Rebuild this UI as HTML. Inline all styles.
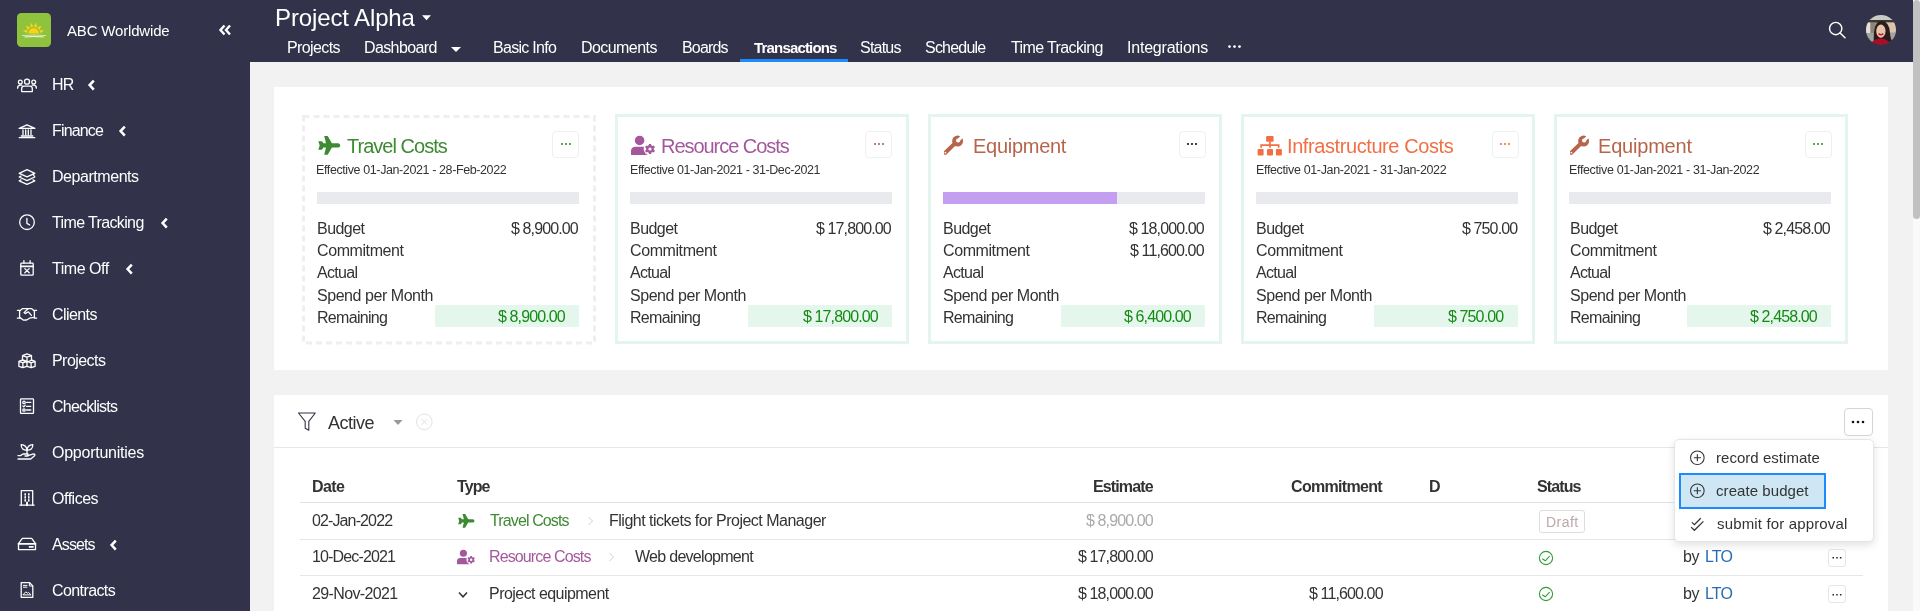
<!DOCTYPE html>
<html><head><meta charset="utf-8"><title>Transactions</title>
<style>
html,body{margin:0;padding:0}
body{width:1920px;height:611px;overflow:hidden;position:relative;background:#f2f2f2;font-family:"Liberation Sans",sans-serif}
.t{position:absolute;white-space:nowrap;line-height:1;will-change:transform}
svg{overflow:visible}
</style></head><body>
<div style="position:absolute;left:0px;top:0px;width:250px;height:611px;background:#32334a"></div>
<div style="position:absolute;left:250px;top:0px;width:1663px;height:62px;background:#32334a"></div>
<div style="position:absolute;left:1913px;top:0px;width:7px;height:611px;background:#fafafa"></div>
<div style="position:absolute;left:1913px;top:0px;width:7px;height:219px;background:#c1c1c1;border-radius:3.5px"></div>
<div style="position:absolute;left:274px;top:87px;width:1614px;height:283px;background:#fff"></div>
<div style="position:absolute;left:274px;top:395px;width:1614px;height:216px;background:#fff"></div>
<svg style="position:absolute;left:17px;top:13px;" width="34" height="34" viewBox="0 0 34 34"><rect width="34" height="34" rx="4.5" fill="#90c33d"/>
<g fill="#fcd116"><path d="M27.42 17.50 L23.42 20.33 L22.54 17.05 Z"/><path d="M24.52 12.48 L22.47 16.94 L20.06 14.53 Z"/><path d="M19.50 9.58 L19.95 14.46 L16.67 13.58 Z"/><path d="M13.70 9.58 L16.53 13.58 L13.25 14.46 Z"/><path d="M8.68 12.48 L13.14 14.53 L10.73 16.94 Z"/><path d="M5.78 17.50 L10.66 17.05 L9.78 20.33 Z"/><path d="M11.2 20.5 A5.4 5.4 0 0 1 22 20.5 Z"/></g>
<path d="M5 22.6 Q17 21.4 29 22.6" stroke="#fff" stroke-width="0.8" fill="none" opacity="0.75"/>
<path d="M7.5 23.9 Q17 23.2 26.5 23.9" stroke="#fff" stroke-width="1" fill="none" opacity="0.9"/></svg>
<div class="t" style="top:23.00px;font-size:15px;color:#fff;letter-spacing:-0.175px;left:67.00px;">ABC Worldwide</div>
<svg style="position:absolute;left:218px;top:24px;" width="14" height="12" viewBox="0 0 14 12"><path d="M6.5 1.5 L2.5 6 L6.5 10.5 M12 1.5 L8 6 L12 10.5" stroke="#fff" stroke-width="2.4" fill="none" stroke-linejoin="miter"/></svg>
<div class="t" style="top:77.00px;font-size:16px;color:#fff;letter-spacing:-0.880px;left:52.10px;">HR</div>
<svg style="position:absolute;left:14px;top:72.6px;fill:none;stroke:#fff;stroke-width:1.3;stroke-linejoin:round;stroke-linecap:round" width="26" height="24" viewBox="0 0 26 24"><circle cx="13" cy="8.7" r="2.5"/><circle cx="6.3" cy="9.1" r="1.9"/><circle cx="19.7" cy="9.1" r="1.9"/><path d="M7.7 18.6 V15.6 a2.4 2.4 0 0 1 2.4-2.4 h5.8 a2.4 2.4 0 0 1 2.4 2.4 V18.6 Z"/><path d="M3.6 15.2 a3 3 0 0 1 3-3 h1.3"/><path d="M22.4 15.2 a3 3 0 0 0 -3-3 h-1.3"/></svg>
<svg style="position:absolute;left:87px;top:79.0px;" width="10" height="12" viewBox="0 0 10 12"><path d="M6.8 1.6 L2.6 6.1 L6.8 10.6" stroke="#fff" stroke-width="2.5" fill="none" stroke-linejoin="miter"/></svg>
<div class="t" style="top:123.00px;font-size:16px;color:#fff;letter-spacing:-0.850px;left:52.10px;">Finance</div>
<svg style="position:absolute;left:14px;top:118.55px;fill:none;stroke:#fff;stroke-width:1.3;stroke-linejoin:round;stroke-linecap:round" width="26" height="24" viewBox="0 0 26 24"><path d="M5.2 9.4 L13 5.8 L20.8 9.4 Z"/><path d="M9 10.8 V15.8 M11.7 10.8 V15.8 M14.3 10.8 V15.8 M17 10.8 V15.8"/><path d="M7.2 17 H18.8"/><path d="M5.2 18.6 H20.8"/></svg>
<svg style="position:absolute;left:118px;top:124.95px;" width="10" height="12" viewBox="0 0 10 12"><path d="M6.8 1.6 L2.6 6.1 L6.8 10.6" stroke="#fff" stroke-width="2.5" fill="none" stroke-linejoin="miter"/></svg>
<div class="t" style="top:169.00px;font-size:16px;color:#fff;letter-spacing:-0.450px;left:52.10px;">Departments</div>
<svg style="position:absolute;left:14px;top:164.5px;fill:none;stroke:#fff;stroke-width:1.3;stroke-linejoin:round;stroke-linecap:round" width="26" height="24" viewBox="0 0 26 24"><path d="M13 4.7 L20.8 8.3 L13 11.9 L5.2 8.3 Z"/><path d="M7 11.1 L5.2 12 L13 15.6 L20.8 12 L19 9.1"/><path d="M7 14.9 L5.2 15.8 L13 19.4 L20.8 15.8 L19 14.9"/></svg>
<div class="t" style="top:215.00px;font-size:16px;color:#fff;letter-spacing:-0.633px;left:52.10px;">Time Tracking</div>
<svg style="position:absolute;left:14px;top:210.45000000000005px;fill:none;stroke:#fff;stroke-width:1.3;stroke-linejoin:round;stroke-linecap:round" width="26" height="24" viewBox="0 0 26 24"><circle cx="13" cy="12.2" r="7.3"/><path d="M12.9 8.3 V13.4 L15.7 15"/></svg>
<svg style="position:absolute;left:160px;top:216.85000000000002px;" width="10" height="12" viewBox="0 0 10 12"><path d="M6.8 1.6 L2.6 6.1 L6.8 10.6" stroke="#fff" stroke-width="2.5" fill="none" stroke-linejoin="miter"/></svg>
<div class="t" style="top:261.00px;font-size:16px;color:#fff;letter-spacing:-0.457px;left:52.10px;">Time Off</div>
<svg style="position:absolute;left:14px;top:256.40000000000003px;fill:none;stroke:#fff;stroke-width:1.3;stroke-linejoin:round;stroke-linecap:round" width="26" height="24" viewBox="0 0 26 24"><rect x="6.8" y="7.2" width="12.4" height="12" rx="0.8"/><path d="M9.9 4.6 V7.2 M16.1 4.6 V7.2"/><path d="M6.8 10.3 H19.2" stroke-width="1.8"/><path d="M10.8 12.6 L15.2 16.8 M15.2 12.6 L10.8 16.8"/></svg>
<svg style="position:absolute;left:125px;top:262.8px;" width="10" height="12" viewBox="0 0 10 12"><path d="M6.8 1.6 L2.6 6.1 L6.8 10.6" stroke="#fff" stroke-width="2.5" fill="none" stroke-linejoin="miter"/></svg>
<div class="t" style="top:307.00px;font-size:16px;color:#fff;letter-spacing:-0.583px;left:52.10px;">Clients</div>
<svg style="position:absolute;left:14px;top:302.35px;fill:none;stroke:#fff;stroke-width:1.3;stroke-linejoin:round;stroke-linecap:round" width="26" height="24" viewBox="0 0 26 24"><path d="M3.4 8.3 H5.6 V16.2 H3.4 M22.6 8.3 H20.4 V16.2 H22.6"/><path d="M5.6 9 L8.6 6.6 H17.4 L20.4 9"/><path d="M5.6 15.4 L9.6 18.2 L12.6 18 L16.4 15.8 L20.4 15.4"/><path d="M14 6.8 L10 10.6 L11.2 11.6 L14.4 9.8 L17.4 13.4"/></svg>
<div class="t" style="top:353.00px;font-size:16px;color:#fff;letter-spacing:-0.557px;left:52.10px;">Projects</div>
<svg style="position:absolute;left:14px;top:348.30000000000007px;fill:none;stroke:#fff;stroke-width:1.3;stroke-linejoin:round;stroke-linecap:round" width="26" height="24" viewBox="0 0 26 24"><path d="M13 5.9 L17.5 7.6 V12.4 L13 14 L8.5 12.4 V7.6 Z M8.5 7.6 L13 9.2 L17.5 7.6 M13 9.2 V14"/><path d="M8.7 11.8 L13 13.4 V18.3 L8.7 19.7 L4.9 18.3 V13.4 Z M4.9 13.4 L8.9 14.9 L13 13.4 M8.9 14.9 V19.7"/><path d="M17.3 11.8 L21.1 13.4 V18.3 L17.3 19.7 L13 18.3 M13 13.4 L17.1 14.9 L21.1 13.4 M17.1 14.9 V19.7"/></svg>
<div class="t" style="top:399.00px;font-size:16px;color:#fff;letter-spacing:-0.767px;left:52.10px;">Checklists</div>
<svg style="position:absolute;left:14px;top:394.25000000000006px;fill:none;stroke:#fff;stroke-width:1.3;stroke-linejoin:round;stroke-linecap:round" width="26" height="24" viewBox="0 0 26 24"><rect x="6.5" y="4.9" width="13" height="14.4" rx="0.6"/><circle cx="10" cy="8.4" r="1.2"/><circle cx="10" cy="16" r="1.2"/><path d="M8.9 12 L9.8 12.9 L11.2 11.3"/><path d="M12.6 8.4 H16.8 M12.6 12.3 H16.8 M12.6 16 H16.8"/></svg>
<div class="t" style="top:445.00px;font-size:16px;color:#fff;letter-spacing:-0.242px;left:52.10px;">Opportunities</div>
<svg style="position:absolute;left:14px;top:440.20000000000005px;fill:none;stroke:#fff;stroke-width:1.3;stroke-linejoin:round;stroke-linecap:round" width="26" height="24" viewBox="0 0 26 24"><path d="M13 10.2 C9.5 10.4 7 8.5 7.2 4.6 C10.5 4.8 12.8 6.6 13 10.2 Z"/><path d="M13 10.2 C16.5 10.4 19 8.5 18.8 4.6 C15.5 4.8 13.2 6.6 13 10.2 Z"/><path d="M13 10.2 V13.4"/><path d="M4 15.6 H6.5 L9 14 H14 V15.4 Q14 16 13.4 16 H11"/><path d="M14 15.6 L19.5 13.9 Q21.6 14 20.5 15.8 L16.8 19 H4"/></svg>
<div class="t" style="top:491.00px;font-size:16px;color:#fff;letter-spacing:-0.483px;left:52.10px;">Offices</div>
<svg style="position:absolute;left:14px;top:486.15000000000003px;fill:none;stroke:#fff;stroke-width:1.3;stroke-linejoin:round;stroke-linecap:round" width="26" height="24" viewBox="0 0 26 24"><path d="M7.3 19.2 V4.7 H18.7 V19.2"/><path d="M5.9 19.2 H20.1"/><path d="M11.2 7.8 V9 M14.8 7.8 V9 M11.2 10.8 V12 M14.8 10.8 V12 M11.2 13.8 V15 M14.8 13.8 V15" stroke-width="1.6"/><path d="M13 16.4 V19.2" stroke-width="2"/></svg>
<div class="t" style="top:537.00px;font-size:16px;color:#fff;letter-spacing:-0.880px;left:52.10px;">Assets</div>
<svg style="position:absolute;left:14px;top:532.0999999999999px;fill:none;stroke:#fff;stroke-width:1.3;stroke-linejoin:round;stroke-linecap:round" width="26" height="24" viewBox="0 0 26 24"><path d="M4.5 11.6 L8.3 6.4 H17.7 L21.5 11.6 V17.6 H4.5 Z"/><path d="M4.5 11.8 H21.5" stroke-width="1.8"/><path d="M15.4 14.9 H19" stroke-width="1.6" stroke-dasharray="1 0.6"/></svg>
<svg style="position:absolute;left:109.4px;top:538.5px;" width="10" height="12" viewBox="0 0 10 12"><path d="M6.8 1.6 L2.6 6.1 L6.8 10.6" stroke="#fff" stroke-width="2.5" fill="none" stroke-linejoin="miter"/></svg>
<div class="t" style="top:583.00px;font-size:16px;color:#fff;letter-spacing:-0.600px;left:52.10px;">Contracts</div>
<svg style="position:absolute;left:14px;top:578.05px;fill:none;stroke:#fff;stroke-width:1.3;stroke-linejoin:round;stroke-linecap:round" width="26" height="24" viewBox="0 0 26 24"><path d="M7.2 4.7 H15.6 L18.8 7.9 V19.3 H7.2 Z"/><path d="M15.4 5 V8 H18.6" stroke-width="1"/><path d="M9.4 7.4 H13 M9.4 9.2 H13" stroke-width="1"/><path d="M9.2 16.6 L11.8 13.8 L13.3 15.2 L14.5 14.4 L16.8 16.6 Z" stroke-width="1"/></svg>
<div class="t" style="top:6.00px;font-size:24px;color:#fff;letter-spacing:-0.125px;left:274.60px;">Project Alpha</div>
<svg style="position:absolute;left:421px;top:14px;" width="11" height="7" viewBox="0 0 11 7"><path d="M1 1.2 H10 L5.5 6.2 Z" fill="#fff"/></svg>
<div class="t" style="top:40.00px;font-size:16px;color:#fff;letter-spacing:-0.600px;left:286.70px;">Projects</div>
<div class="t" style="top:40.00px;font-size:16px;color:#fff;letter-spacing:-0.613px;left:364.20px;">Dashboard</div>
<div class="t" style="top:40.00px;font-size:16px;color:#fff;letter-spacing:-0.700px;left:493.10px;">Basic Info</div>
<div class="t" style="top:40.00px;font-size:16px;color:#fff;letter-spacing:-0.562px;left:581.40px;">Documents</div>
<div class="t" style="top:40.00px;font-size:16px;color:#fff;letter-spacing:-0.820px;left:681.70px;">Boards</div>
<div class="t" style="top:40.00px;font-size:16px;color:#fff;letter-spacing:-0.780px;left:859.70px;">Status</div>
<div class="t" style="top:40.00px;font-size:16px;color:#fff;letter-spacing:-0.786px;left:925.30px;">Schedule</div>
<div class="t" style="top:40.00px;font-size:16px;color:#fff;letter-spacing:-0.617px;left:1011.20px;">Time Tracking</div>
<div class="t" style="top:40.00px;font-size:16px;color:#fff;letter-spacing:-0.209px;left:1127.00px;">Integrations</div>
<div class="t" style="top:40.00px;font-size:15px;color:#fff;font-weight:bold;letter-spacing:-0.825px;left:753.55px;">Transactions</div>
<svg style="position:absolute;left:450px;top:46px;" width="12" height="7" viewBox="0 0 12 7"><path d="M1 1 H11 L6 6 Z" fill="#fff"/></svg>
<div style="position:absolute;left:740px;top:59px;width:108px;height:3px;background:#1a8cff"></div>
<svg style="position:absolute;left:1227px;top:43px;" width="15" height="7" viewBox="0 0 15 7"><circle cx="2.5" cy="3.6" r="1.35" fill="#fff"/><circle cx="7.5" cy="3.6" r="1.35" fill="#fff"/><circle cx="12.5" cy="3.6" r="1.35" fill="#fff"/></svg>
<svg style="position:absolute;left:1826px;top:19px;" width="22" height="22" viewBox="0 0 22 22"><circle cx="9.7" cy="9.5" r="6.15" stroke="#fff" stroke-width="1.45" fill="none"/><path d="M14.1 14 L19 18.8" stroke="#fff" stroke-width="1.5" stroke-linecap="round"/></svg>
<svg style="position:absolute;left:1866px;top:15px;" width="30" height="30" viewBox="0 0 30 30"><defs><clipPath id="av"><circle cx="15" cy="14.9" r="15"/></clipPath><filter id="avb" x="-20%" y="-20%" width="140%" height="140%"><feGaussianBlur stdDeviation="0.45"/></filter></defs><g clip-path="url(#av)"><g filter="url(#avb)"><rect x="-3" y="-3" width="36" height="36" fill="#9d9e99"/><rect x="-3" y="-3" width="36" height="8.5" fill="#c9cbc6"/><rect x="-3" y="5" width="36" height="2.6" fill="#3f372f"/><rect x="-3" y="7.5" width="7.5" height="11" fill="#e6e1d6"/><rect x="4.5" y="7.5" width="5" height="11" fill="#8c8478"/><rect x="20" y="7.5" width="13" height="10" fill="#dcc3ab"/><rect x="-3" y="18" width="36" height="15" fill="#a2a39e"/><path d="M7.8 27 Q7 6.5 15.2 6 Q23.5 6.3 24 18 Q24.5 24 26.5 27 L20 27 Z" fill="#2a1f1b"/><ellipse cx="14.9" cy="16.2" rx="4.6" ry="6.6" fill="#e9c3ab"/><path d="M12.6 18.6 Q14.9 20.8 17.2 18.6" stroke="#d0122c" stroke-width="1.5" fill="none"/><path d="M3 33 Q4.5 24.2 14.5 23.6 Q23.5 23.8 26.5 33 Z" fill="#a90d2a"/></g></g></svg>
<svg style="position:absolute;left:301.5px;top:114.5px;" width="294" height="229.5" viewBox="0 0 294 229.5"><rect x="1.5" y="1.5" width="291" height="226.5" fill="none" stroke="#efefef" stroke-width="3" stroke-dasharray="6 4"/></svg>
<svg style="position:absolute;left:314.0px;top:132px;fill:#3c8a31" width="30" height="26" viewBox="0 0 30 26"><path d="M4.3 9.2 H7.9 L9.4 11.3 H12 L10.2 4 H13.7 L17.9 11.2 H24.2 Q26.1 11.4 26.3 13.4 Q26.1 15.4 24.2 15.6 H17.9 L13.7 22.8 H10.2 L12 15.5 H9.4 L7.9 17.8 H4.3 L5.7 13.4 Z"/></svg>
<div class="t" style="top:136.00px;font-size:20px;color:#3c8a31;letter-spacing:-0.973px;left:347.00px;">Travel Costs</div>
<div class="t" style="top:164.00px;font-size:12.5px;color:#333;letter-spacing:-0.394px;left:316.40px;">Effective 01-Jan-2021 - 28-Feb-2022</div>
<div style="position:absolute;left:552.3px;top:130.8px;width:27px;height:27px;box-sizing:border-box;border:1px solid #f0f0f0;border-radius:4px"></div>
<svg style="position:absolute;left:561.0px;top:143px;fill:#3c8a31" width="10" height="2" viewBox="0 0 10 2"><circle cx="1" cy="1" r="1.05"/><circle cx="5" cy="1" r="1.05"/><circle cx="9" cy="1" r="1.05"/></svg>
<div style="position:absolute;left:317.0px;top:191.6px;width:261.5px;height:12.2px;background:#e8eaed"></div>
<div class="t" style="top:221.00px;font-size:16px;color:#333;letter-spacing:-0.540px;left:317.10px;">Budget</div>
<div class="t" style="top:243.00px;font-size:16px;color:#333;letter-spacing:-0.411px;left:317.10px;">Commitment</div>
<div class="t" style="top:265.00px;font-size:16px;color:#333;letter-spacing:-0.680px;left:317.10px;">Actual</div>
<div class="t" style="top:288.00px;font-size:16px;color:#333;letter-spacing:-0.450px;left:317.10px;">Spend per Month</div>
<div class="t" style="top:310.00px;font-size:16px;color:#333;letter-spacing:-0.688px;left:317.10px;">Remaining</div>
<div class="t" style="top:221.00px;font-size:16px;color:#333;letter-spacing:-0.880px;left:510.82px;">$ 8,900.00</div>
<div style="position:absolute;left:435.0px;top:305.4px;width:143.5px;height:22.1px;background:#e5f6ed"></div>
<div class="t" style="top:309.00px;font-size:16px;color:#148c14;letter-spacing:-0.880px;left:497.52px;">$ 8,900.00</div>
<div style="position:absolute;left:614.6px;top:114.2px;width:294px;height:229.8px;box-sizing:border-box;border:3px solid #e3f5ec"></div>
<svg style="position:absolute;left:627.0px;top:132px;fill:#a5579c" width="32" height="26" viewBox="0 0 32 26"><defs><mask id="rm1"><rect x="-2" y="-2" width="36" height="30" fill="#fff"/><circle cx="23.0" cy="17.0" r="6.3" fill="#000"/></mask></defs><circle cx="12.6" cy="8.4" r="4.75"/><path mask="url(#rm1)" d="M4 23 V19.3 Q4 14.7 8.6 14.7 H16.6 Q20 14.7 21 17 V23 Z"/><path d="M21.67 13.34 L22.01 11.90 L23.99 11.90 L24.33 13.34 L25.51 14.01 L26.92 13.59 L27.92 15.31 L26.84 16.32 L26.84 17.68 L27.92 18.69 L26.92 20.41 L25.51 19.99 L24.33 20.66 L23.99 22.10 L22.01 22.10 L21.67 20.66 L20.49 19.99 L19.08 20.41 L18.08 18.69 L19.16 17.68 L19.16 16.32 L18.08 15.31 L19.08 13.59 L20.49 14.01 Z M24.60 17.00 A1.6 1.6 0 1 0 21.40 17.00 A1.6 1.6 0 1 0 24.60 17.00 Z" fill-rule="evenodd"/></svg>
<div class="t" style="top:136.00px;font-size:20px;color:#a5579c;letter-spacing:-1.046px;left:661.00px;">Resource Costs</div>
<div class="t" style="top:164.00px;font-size:12.5px;color:#333;letter-spacing:-0.418px;left:629.50px;">Effective 01-Jan-2021 - 31-Dec-2021</div>
<div style="position:absolute;left:865.4px;top:130.8px;width:27px;height:27px;box-sizing:border-box;border:1px solid #f0f0f0;border-radius:4px"></div>
<svg style="position:absolute;left:874.1px;top:143px;fill:#a5579c" width="10" height="2" viewBox="0 0 10 2"><circle cx="1" cy="1" r="1.05"/><circle cx="5" cy="1" r="1.05"/><circle cx="9" cy="1" r="1.05"/></svg>
<div style="position:absolute;left:630.1px;top:191.6px;width:261.5px;height:12.2px;background:#e8eaed"></div>
<div class="t" style="top:221.00px;font-size:16px;color:#333;letter-spacing:-0.540px;left:630.20px;">Budget</div>
<div class="t" style="top:243.00px;font-size:16px;color:#333;letter-spacing:-0.411px;left:630.20px;">Commitment</div>
<div class="t" style="top:265.00px;font-size:16px;color:#333;letter-spacing:-0.680px;left:630.20px;">Actual</div>
<div class="t" style="top:288.00px;font-size:16px;color:#333;letter-spacing:-0.450px;left:630.20px;">Spend per Month</div>
<div class="t" style="top:310.00px;font-size:16px;color:#333;letter-spacing:-0.688px;left:630.20px;">Remaining</div>
<div class="t" style="top:221.00px;font-size:16px;color:#333;letter-spacing:-0.880px;left:815.90px;">$ 17,800.00</div>
<div style="position:absolute;left:748.1px;top:305.4px;width:143.5px;height:22.1px;background:#e5f6ed"></div>
<div class="t" style="top:309.00px;font-size:16px;color:#148c14;letter-spacing:-0.880px;left:802.60px;">$ 17,800.00</div>
<div style="position:absolute;left:927.7px;top:114.2px;width:294px;height:229.8px;box-sizing:border-box;border:3px solid #e3f5ec"></div>
<svg style="position:absolute;left:940.0px;top:132px;fill:#b6654b" width="26" height="26" viewBox="0 0 26 26"><defs><mask id="wm2"><rect x="-2" y="-2" width="30" height="30" fill="#fff"/><circle cx="18.1" cy="8.5" r="2.1" fill="#000"/><path d="M17.04 7.44 L22.7 1.78 L24.82 3.9 L19.16 9.56 Z" fill="#000"/><circle cx="5.4" cy="20.7" r="0.9" fill="#000"/></mask></defs><g mask="url(#wm2)"><circle cx="17.6" cy="9.1" r="5.5"/><path d="M5.3 20.8 L15.2 11.1" stroke-width="4" stroke-linecap="round" style="stroke:#b6654b"/></g></svg>
<div class="t" style="top:136.00px;font-size:20px;color:#b6654b;letter-spacing:-0.275px;left:973.20px;">Equipment</div>
<div style="position:absolute;left:1178.5px;top:130.8px;width:27px;height:27px;box-sizing:border-box;border:1px solid #f0f0f0;border-radius:4px"></div>
<svg style="position:absolute;left:1187.2px;top:143px;fill:#111" width="10" height="2" viewBox="0 0 10 2"><circle cx="1" cy="1" r="1.05"/><circle cx="5" cy="1" r="1.05"/><circle cx="9" cy="1" r="1.05"/></svg>
<div style="position:absolute;left:943.2px;top:191.6px;width:261.5px;height:12.2px;background:#e8eaed"></div>
<div style="position:absolute;left:943.2px;top:191.6px;width:173.8px;height:12.2px;background:#c49ef0"></div>
<div class="t" style="top:221.00px;font-size:16px;color:#333;letter-spacing:-0.540px;left:943.30px;">Budget</div>
<div class="t" style="top:243.00px;font-size:16px;color:#333;letter-spacing:-0.411px;left:943.30px;">Commitment</div>
<div class="t" style="top:265.00px;font-size:16px;color:#333;letter-spacing:-0.680px;left:943.30px;">Actual</div>
<div class="t" style="top:288.00px;font-size:16px;color:#333;letter-spacing:-0.450px;left:943.30px;">Spend per Month</div>
<div class="t" style="top:310.00px;font-size:16px;color:#333;letter-spacing:-0.688px;left:943.30px;">Remaining</div>
<div class="t" style="top:221.00px;font-size:16px;color:#333;letter-spacing:-0.880px;left:1129.00px;">$ 18,000.00</div>
<div class="t" style="top:243.00px;font-size:16px;color:#333;letter-spacing:-0.880px;left:1130.20px;">$ 11,600.00</div>
<div style="position:absolute;left:1061.2px;top:305.4px;width:143.5px;height:22.1px;background:#e5f6ed"></div>
<div class="t" style="top:309.00px;font-size:16px;color:#148c14;letter-spacing:-0.880px;left:1123.72px;">$ 6,400.00</div>
<div style="position:absolute;left:1240.8px;top:114.2px;width:294px;height:229.8px;box-sizing:border-box;border:3px solid #e3f5ec"></div>
<svg style="position:absolute;left:1254.0px;top:132px;fill:#f26f45" width="32" height="26" viewBox="0 0 32 26"><rect x="12.1" y="4" width="7.5" height="5.8" rx="1"/><path d="M15.1 9.5 H16.8 V12.3 H25.5 V15.7 H23.8 V14 H16.8 V15.7 H15.1 V14 H8 V15.7 H6.3 V12.3 H15.1 Z"/><rect x="3.6" y="17" width="6" height="6.4" rx="1"/><rect x="13" y="17" width="6" height="6.4" rx="1"/><rect x="21.9" y="17" width="6" height="6.4" rx="1"/></svg>
<div class="t" style="top:136.00px;font-size:20px;color:#f26f45;letter-spacing:-0.411px;left:1287.20px;">Infrastructure Costs</div>
<div class="t" style="top:164.00px;font-size:12.5px;color:#333;letter-spacing:-0.353px;left:1255.70px;">Effective 01-Jan-2021 - 31-Jan-2022</div>
<div style="position:absolute;left:1491.6px;top:130.8px;width:27px;height:27px;box-sizing:border-box;border:1px solid #f0f0f0;border-radius:4px"></div>
<svg style="position:absolute;left:1500.3px;top:143px;fill:#f26f45" width="10" height="2" viewBox="0 0 10 2"><circle cx="1" cy="1" r="1.05"/><circle cx="5" cy="1" r="1.05"/><circle cx="9" cy="1" r="1.05"/></svg>
<div style="position:absolute;left:1256.3px;top:191.6px;width:261.5px;height:12.2px;background:#e8eaed"></div>
<div class="t" style="top:221.00px;font-size:16px;color:#333;letter-spacing:-0.540px;left:1256.40px;">Budget</div>
<div class="t" style="top:243.00px;font-size:16px;color:#333;letter-spacing:-0.411px;left:1256.40px;">Commitment</div>
<div class="t" style="top:265.00px;font-size:16px;color:#333;letter-spacing:-0.680px;left:1256.40px;">Actual</div>
<div class="t" style="top:288.00px;font-size:16px;color:#333;letter-spacing:-0.450px;left:1256.40px;">Spend per Month</div>
<div class="t" style="top:310.00px;font-size:16px;color:#333;letter-spacing:-0.688px;left:1256.40px;">Remaining</div>
<div class="t" style="top:221.00px;font-size:16px;color:#333;letter-spacing:-0.880px;left:1461.66px;">$ 750.00</div>
<div style="position:absolute;left:1374.3px;top:305.4px;width:143.5px;height:22.1px;background:#e5f6ed"></div>
<div class="t" style="top:309.00px;font-size:16px;color:#148c14;letter-spacing:-0.880px;left:1448.36px;">$ 750.00</div>
<div style="position:absolute;left:1553.9px;top:114.2px;width:294px;height:229.8px;box-sizing:border-box;border:3px solid #e3f5ec"></div>
<svg style="position:absolute;left:1566.2px;top:132px;fill:#b6654b" width="26" height="26" viewBox="0 0 26 26"><defs><mask id="wm4"><rect x="-2" y="-2" width="30" height="30" fill="#fff"/><circle cx="18.1" cy="8.5" r="2.1" fill="#000"/><path d="M17.04 7.44 L22.7 1.78 L24.82 3.9 L19.16 9.56 Z" fill="#000"/><circle cx="5.4" cy="20.7" r="0.9" fill="#000"/></mask></defs><g mask="url(#wm4)"><circle cx="17.6" cy="9.1" r="5.5"/><path d="M5.3 20.8 L15.2 11.1" stroke-width="4" stroke-linecap="round" style="stroke:#b6654b"/></g></svg>
<div class="t" style="top:136.00px;font-size:20px;color:#b6654b;letter-spacing:-0.200px;left:1598.10px;">Equipment</div>
<div class="t" style="top:164.00px;font-size:12.5px;color:#333;letter-spacing:-0.353px;left:1568.80px;">Effective 01-Jan-2021 - 31-Jan-2022</div>
<div style="position:absolute;left:1804.7px;top:130.8px;width:27px;height:27px;box-sizing:border-box;border:1px solid #f0f0f0;border-radius:4px"></div>
<svg style="position:absolute;left:1813.4px;top:143px;fill:#3c8a31" width="10" height="2" viewBox="0 0 10 2"><circle cx="1" cy="1" r="1.05"/><circle cx="5" cy="1" r="1.05"/><circle cx="9" cy="1" r="1.05"/></svg>
<div style="position:absolute;left:1569.4px;top:191.6px;width:261.5px;height:12.2px;background:#e8eaed"></div>
<div class="t" style="top:221.00px;font-size:16px;color:#333;letter-spacing:-0.540px;left:1569.50px;">Budget</div>
<div class="t" style="top:243.00px;font-size:16px;color:#333;letter-spacing:-0.411px;left:1569.50px;">Commitment</div>
<div class="t" style="top:265.00px;font-size:16px;color:#333;letter-spacing:-0.680px;left:1569.50px;">Actual</div>
<div class="t" style="top:288.00px;font-size:16px;color:#333;letter-spacing:-0.450px;left:1569.50px;">Spend per Month</div>
<div class="t" style="top:310.00px;font-size:16px;color:#333;letter-spacing:-0.688px;left:1569.50px;">Remaining</div>
<div class="t" style="top:221.00px;font-size:16px;color:#333;letter-spacing:-0.880px;left:1763.22px;">$ 2,458.00</div>
<div style="position:absolute;left:1687.4px;top:305.4px;width:143.5px;height:22.1px;background:#e5f6ed"></div>
<div class="t" style="top:309.00px;font-size:16px;color:#148c14;letter-spacing:-0.880px;left:1749.92px;">$ 2,458.00</div>
<svg style="position:absolute;left:297px;top:411px;" width="20" height="21" viewBox="0 0 20 21"><path d="M1.5 2 H18.3 L11.8 10.3 V19.3 L8.2 17.3 V10.3 Z" fill="none" stroke="#32334a" stroke-width="1.1" stroke-linejoin="round"/></svg>
<div class="t" style="top:414.00px;font-size:18px;color:#333;letter-spacing:-0.480px;left:328.30px;">Active</div>
<svg style="position:absolute;left:392px;top:419px;" width="12" height="7" viewBox="0 0 12 7"><path d="M1.5 1 H10.5 L6 6 Z" fill="#999"/></svg>
<svg style="position:absolute;left:414px;top:412px;" width="20" height="20" viewBox="0 0 20 20"><circle cx="10.3" cy="9.8" r="7.8" fill="none" stroke="#e2e2e2" stroke-width="1"/><path d="M7.3 6.8 L13.3 12.8 M13.3 6.8 L7.3 12.8" stroke="#e2e2e2" stroke-width="1"/></svg>
<div style="position:absolute;left:274px;top:447px;width:1614px;height:1px;background:#e6e6e6"></div>
<div style="position:absolute;left:1843.5px;top:408px;width:29px;height:28px;box-sizing:border-box;border:1px solid #d5d5d5;border-radius:4px"></div>
<svg style="position:absolute;left:1851px;top:420px;fill:#111" width="14" height="4" viewBox="0 0 14 4"><circle cx="2" cy="2" r="1.3"/><circle cx="7" cy="2" r="1.3"/><circle cx="12" cy="2" r="1.3"/></svg>
<div class="t" style="top:479.00px;font-size:16px;color:#333;font-weight:bold;letter-spacing:-0.567px;left:311.60px;">Date</div>
<div class="t" style="top:479.00px;font-size:16px;color:#333;font-weight:bold;letter-spacing:-0.880px;left:457.40px;">Type</div>
<div class="t" style="top:479.00px;font-size:16px;color:#333;font-weight:bold;letter-spacing:-0.880px;left:1093.46px;">Estimate</div>
<div class="t" style="top:479.00px;font-size:16px;color:#333;font-weight:bold;letter-spacing:-0.678px;left:1290.90px;">Commitment</div>
<div class="t" style="top:479.00px;font-size:16px;color:#333;font-weight:bold;left:1429.30px;">D</div>
<div class="t" style="top:479.00px;font-size:16px;color:#333;font-weight:bold;letter-spacing:-0.880px;left:1537.30px;">Status</div>
<div style="position:absolute;left:300px;top:502px;width:1563px;height:1px;background:#e3e3e3"></div>
<div style="position:absolute;left:300px;top:538.5px;width:1563px;height:1px;background:#e6e6e6"></div>
<div style="position:absolute;left:300px;top:575px;width:1563px;height:1px;background:#e6e6e6"></div>
<div class="t" style="top:513.00px;font-size:16px;color:#333;letter-spacing:-0.880px;left:312.10px;">02-Jan-2022</div>
<div class="t" style="top:549.00px;font-size:16px;color:#333;letter-spacing:-0.850px;left:311.80px;">10-Dec-2021</div>
<div class="t" style="top:586.00px;font-size:16px;color:#333;letter-spacing:-0.630px;left:311.60px;">29-Nov-2021</div>
<svg style="position:absolute;left:454.8px;top:510.6px;fill:#3c8a31" width="22.2" height="19.24" viewBox="0 0 30 26"><path d="M4.3 9.2 H7.9 L9.4 11.3 H12 L10.2 4 H13.7 L17.9 11.2 H24.2 Q26.1 11.4 26.3 13.4 Q26.1 15.4 24.2 15.6 H17.9 L13.7 22.8 H10.2 L12 15.5 H9.4 L7.9 17.8 H4.3 L5.7 13.4 Z"/></svg>
<div class="t" style="top:513.00px;font-size:16px;color:#3c8a31;letter-spacing:-0.880px;left:490.10px;">Travel Costs</div>
<svg style="position:absolute;left:585px;top:514.5px;" width="10" height="12" viewBox="0 0 10 12"><path d="M3.5 2 L7.5 6 L3.5 10" fill="none" stroke="#d0d0d0" stroke-width="1"/></svg>
<div class="t" style="top:513.00px;font-size:16px;color:#333;letter-spacing:-0.500px;left:609.10px;">Flight tickets for Project Manager</div>
<svg style="position:absolute;left:454px;top:546.9px;fill:#a5579c" width="23.9" height="19.42" viewBox="0 0 32 26"><defs><mask id="rmT"><rect x="-2" y="-2" width="36" height="30" fill="#fff"/><circle cx="23.0" cy="17.0" r="6.3" fill="#000"/></mask></defs><circle cx="12.6" cy="8.4" r="4.75"/><path mask="url(#rmT)" d="M4 23 V19.3 Q4 14.7 8.6 14.7 H16.6 Q20 14.7 21 17 V23 Z"/><path d="M21.67 13.34 L22.01 11.90 L23.99 11.90 L24.33 13.34 L25.51 14.01 L26.92 13.59 L27.92 15.31 L26.84 16.32 L26.84 17.68 L27.92 18.69 L26.92 20.41 L25.51 19.99 L24.33 20.66 L23.99 22.10 L22.01 22.10 L21.67 20.66 L20.49 19.99 L19.08 20.41 L18.08 18.69 L19.16 17.68 L19.16 16.32 L18.08 15.31 L19.08 13.59 L20.49 14.01 Z M24.60 17.00 A1.6 1.6 0 1 0 21.40 17.00 A1.6 1.6 0 1 0 24.60 17.00 Z" fill-rule="evenodd"/></svg>
<div class="t" style="top:549.00px;font-size:16px;color:#a5579c;letter-spacing:-0.880px;left:489.10px;">Resource Costs</div>
<svg style="position:absolute;left:606px;top:551px;" width="10" height="12" viewBox="0 0 10 12"><path d="M3.5 2 L7.5 6 L3.5 10" fill="none" stroke="#d0d0d0" stroke-width="1"/></svg>
<div class="t" style="top:549.00px;font-size:16px;color:#333;letter-spacing:-0.714px;left:634.50px;">Web development</div>
<svg style="position:absolute;left:457px;top:590px;" width="12" height="10" viewBox="0 0 12 10"><path d="M2 2.5 L6 6.8 L10 2.5" fill="none" stroke="#333" stroke-width="1.5"/></svg>
<div class="t" style="top:586.00px;font-size:16px;color:#333;letter-spacing:-0.544px;left:489.10px;">Project equipment</div>
<div class="t" style="top:513.00px;font-size:16px;color:#aaa;letter-spacing:-0.880px;left:1086.42px;">$ 8,900.00</div>
<div class="t" style="top:549.00px;font-size:16px;color:#333;letter-spacing:-0.880px;left:1078.40px;">$ 17,800.00</div>
<div class="t" style="top:586.00px;font-size:16px;color:#333;letter-spacing:-0.880px;left:1078.40px;">$ 18,000.00</div>
<div class="t" style="top:586.00px;font-size:16px;color:#333;letter-spacing:-0.880px;left:1308.50px;">$ 11,600.00</div>
<div style="position:absolute;left:1539.3px;top:510px;width:45.3px;height:22.6px;box-sizing:border-box;border:1px solid #dddddd;border-radius:3px"></div>
<div class="t" style="top:515.00px;font-size:14px;color:#bca7a9;letter-spacing:0.475px;left:1545.90px;">Draft</div>
<svg style="position:absolute;left:1538px;top:549.9px;" width="16" height="16" viewBox="0 0 16 16"><circle cx="8" cy="8" r="6.6" fill="none" stroke="#2f9e3a" stroke-width="1.1"/><path d="M4.3 8.7 L7.3 10.8 L11.6 6.1" fill="none" stroke="#2f9e3a" stroke-width="1.1"/></svg>
<div class="t" style="top:549.00px;font-size:16px;color:#333;letter-spacing:-0.500px;left:1682.90px;">by</div>
<div class="t" style="top:549.00px;font-size:16px;color:#2b6cb0;letter-spacing:-0.880px;left:1704.70px;">LTO</div>
<div style="position:absolute;left:1828px;top:548.6px;width:18px;height:18px;box-sizing:border-box;border:1px solid #e6e6e6;border-radius:3px"></div>
<svg style="position:absolute;left:1832px;top:557.1px;fill:#222" width="10" height="2" viewBox="0 0 10 2"><rect x="0.5" width="1.5" height="1.5"/><rect x="4.2" width="1.5" height="1.5"/><rect x="7.9" width="1.5" height="1.5"/></svg>
<svg style="position:absolute;left:1538px;top:586.4px;" width="16" height="16" viewBox="0 0 16 16"><circle cx="8" cy="8" r="6.6" fill="none" stroke="#2f9e3a" stroke-width="1.1"/><path d="M4.3 8.7 L7.3 10.8 L11.6 6.1" fill="none" stroke="#2f9e3a" stroke-width="1.1"/></svg>
<div class="t" style="top:586.00px;font-size:16px;color:#333;letter-spacing:-0.500px;left:1682.90px;">by</div>
<div class="t" style="top:586.00px;font-size:16px;color:#2b6cb0;letter-spacing:-0.880px;left:1704.70px;">LTO</div>
<div style="position:absolute;left:1828px;top:585.1px;width:18px;height:18px;box-sizing:border-box;border:1px solid #e6e6e6;border-radius:3px"></div>
<svg style="position:absolute;left:1832px;top:593.6px;fill:#222" width="10" height="2" viewBox="0 0 10 2"><rect x="0.5" width="1.5" height="1.5"/><rect x="4.2" width="1.5" height="1.5"/><rect x="7.9" width="1.5" height="1.5"/></svg>
<div style="position:absolute;left:1674px;top:439px;width:199.5px;height:102.5px;box-sizing:border-box;background:#fff;border:1px solid #e6e6e6;border-radius:5px;box-shadow:0 3px 8px rgba(0,0,0,0.12)"></div>
<div style="position:absolute;left:1678.5px;top:473.2px;width:147.5px;height:35.5px;box-sizing:border-box;background:#cfe6f5;border:2px solid #1a8cff"></div>
<svg style="position:absolute;left:1689px;top:449.6px;" width="17" height="17" viewBox="0 0 17 17"><circle cx="8.35" cy="7.7" r="6.8" fill="none" stroke="#333" stroke-width="1.05"/><path d="M8.35 4.2 V11.2 M4.8 7.8 H11.9" stroke="#333" stroke-width="1.1"/></svg>
<svg style="position:absolute;left:1689px;top:482.6px;" width="17" height="17" viewBox="0 0 17 17"><circle cx="8.35" cy="7.7" r="6.8" fill="none" stroke="#333" stroke-width="1.05"/><path d="M8.35 4.2 V11.2 M4.8 7.8 H11.9" stroke="#333" stroke-width="1.1"/></svg>
<svg style="position:absolute;left:1684px;top:512px;" width="26" height="24" viewBox="0 0 26 24"><path d="M7.9 10.4 L10.4 12.6 L16.7 6.3 M7.1 15.1 L10.4 18.3 L19.4 9.4" fill="none" stroke="#333" stroke-width="1.25"/></svg>
<div class="t" style="top:450.00px;font-size:15px;color:#333;letter-spacing:0.036px;left:1716.00px;">record estimate</div>
<div class="t" style="top:483.00px;font-size:15px;color:#333;letter-spacing:0.067px;left:1716.40px;">create budget</div>
<div class="t" style="top:516.00px;font-size:15px;color:#333;letter-spacing:0.150px;left:1716.60px;">submit for approval</div>
</body></html>
